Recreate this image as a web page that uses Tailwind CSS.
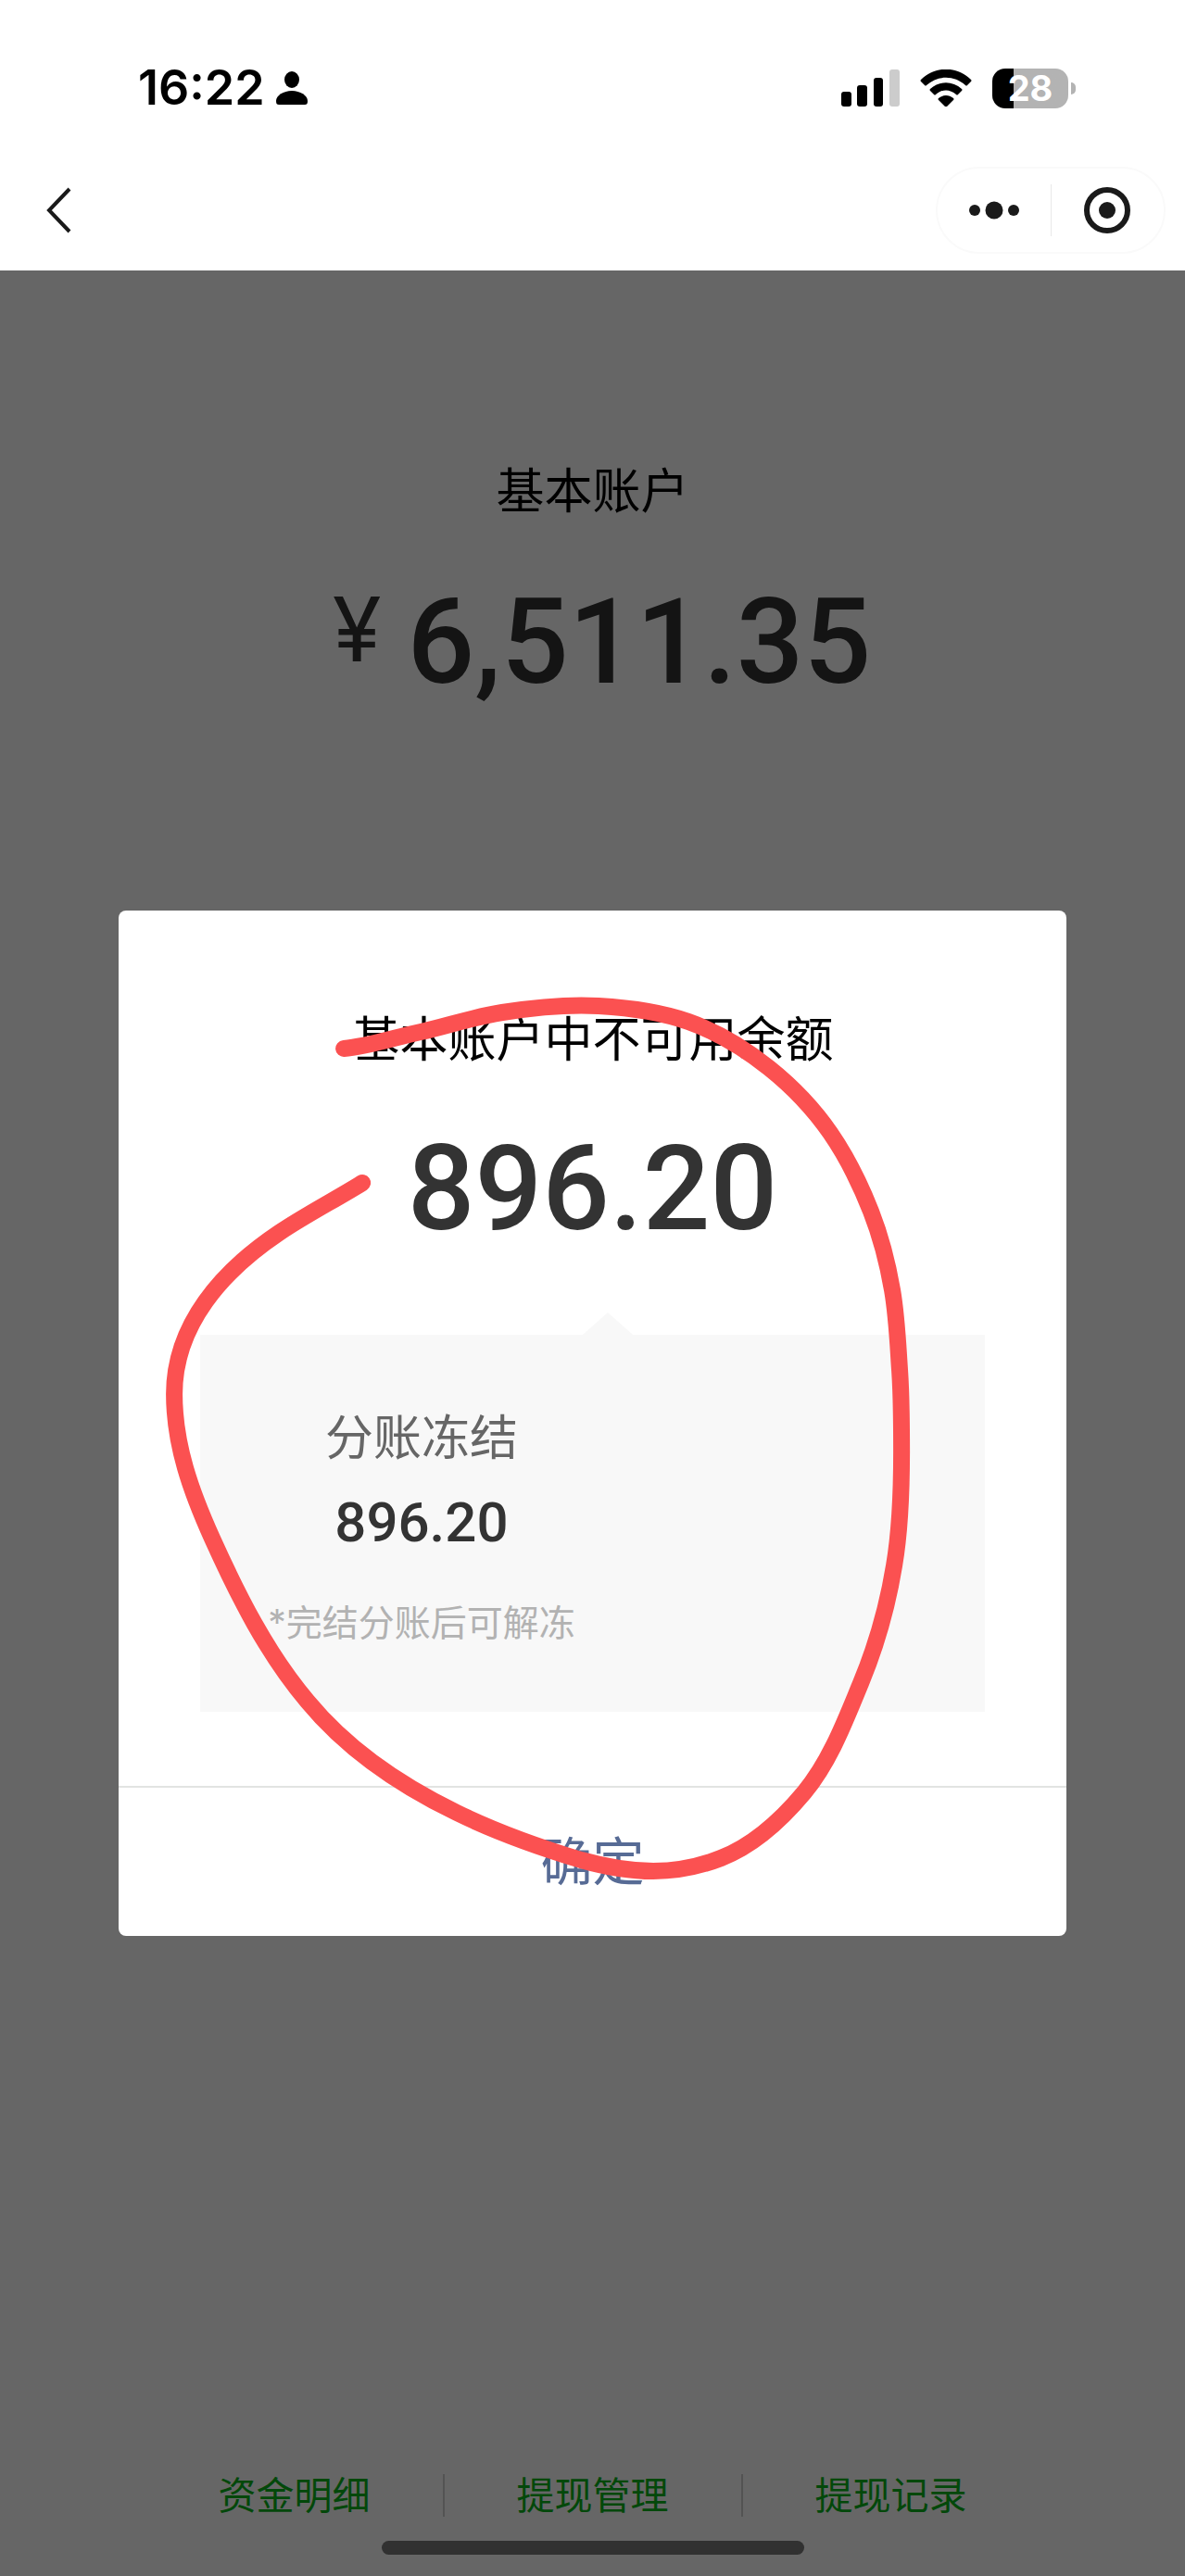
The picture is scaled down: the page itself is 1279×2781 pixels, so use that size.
<!DOCTYPE html>
<html lang="zh-CN">
<head>
    <meta charset="UTF-8">
    <meta name="viewport" content="width=device-width, initial-scale=1.0">
    <title>基本账户</title>
    <script src="https://cdn.jsdelivr.net/npm/@tailwindcss/browser@4"></script>
</head>
<body class="bg-white min-h-screen flex flex-col font-['Inter','Noto_Sans_CJK_SC',sans-serif]">
    <header class="bg-white">
        <!-- Status bar -->
        <div class="flex items-center justify-between pl-[149px] pr-[118px] pt-[66px] h-[124px]">
            <div class="flex items-center gap-3">
                <span class="text-[52px] leading-[60px] font-semibold text-black">16:22</span>
                <svg class="w-[34px] h-9" viewBox="0 0 34 36" fill="#000">
                    <ellipse cx="17" cy="9" rx="8" ry="9"/>
                    <path d="M0 32C0 26 8 21 17 21s17 5 17 11c0 3-1 4-3 4H3c-2 0-3-1-3-4z"/>
                </svg>
            </div>
            <div class="flex items-center gap-[22px]">
                <svg class="w-[63px] h-10" viewBox="0 0 63 40" fill="#000">
                    <rect x="0" y="24" width="11" height="16" rx="3"/>
                    <rect x="17" y="17" width="11" height="23" rx="3"/>
                    <rect x="35" y="9" width="10" height="31" rx="3"/>
                    <rect x="52" y="0" width="11" height="40" rx="3" fill="#ccc"/>
                </svg>
                <svg class="w-14 h-10" viewBox="0 0 56 40" fill="#000">
                    <path d="M1 11C16-4 40-4 55 11q1 1 0 2l-4 4q-1 1-2 0C37 6 19 6 7 17q-1 1-2 0l-4-4q-1-1 0-2z"/>
                    <path d="M11 21c10-9 24-9 34 0q1 1 0 2l-4 4q-1 1-2 0c-7-6-15-6-22 0q-1 1-2 0l-4-4q-1-1 0-2z"/>
                    <path d="M20 31c5-4 11-4 16 0q1 1 0 2l-7 7q-1 1-2 0l-7-7q-1-1 0-2z"/>
                </svg>
                <div class="flex items-center gap-[3px]">
                    <div class="w-[82px] h-[43px] rounded-[14px] bg-linear-to-r from-black from-28% to-[#b3b3b3] to-28% flex items-center justify-center text-white text-[38px] leading-[43px] font-bold">28</div>
                    <div class="w-[5px] h-[13px] rounded-r-full bg-[#b3b3b3]"></div>
                </div>
            </div>
        </div>

        <!-- Nav bar -->
        <div class="flex items-center justify-between pl-12 pr-[21px] pt-[56px] pb-[18px]">
            <button class="cursor-pointer" aria-label="返回">
                <svg class="w-8 h-[50px]" viewBox="0 0 32 50" fill="none" stroke="#1a1a1a" stroke-width="4">
                    <path d="M27 2L5 25l22 23"/>
                </svg>
            </button>
            <div class="flex items-center w-[248px] h-[94px] rounded-full border-2 border-[#fafafa]">
                <button class="flex-1 flex justify-center cursor-pointer" aria-label="更多">
                    <svg class="w-[54px] h-5" viewBox="0 0 54 20" fill="#1a1a1a">
                        <circle cx="6" cy="10" r="6"/>
                        <circle cx="27" cy="10" r="9.5"/>
                        <circle cx="48" cy="10" r="6"/>
                    </svg>
                </button>
                <div class="w-px h-14 bg-[#e8e8e8]"></div>
                <button class="flex-1 flex justify-center cursor-pointer" aria-label="关闭">
                    <svg class="w-[50px] h-[50px]" viewBox="0 0 50 50">
                        <circle cx="25" cy="25" r="22" fill="none" stroke="#1a1a1a" stroke-width="6"/>
                        <circle cx="25" cy="25" r="9" fill="#1a1a1a"/>
                    </svg>
                </button>
            </div>
        </div>
    </header>

    <main class="relative flex-1 flex flex-col items-center bg-white pt-[203px]">
        <h1 class="text-[52px] leading-[72px] text-black">基本账户</h1>
        <p class="flex items-start gap-7 mt-[46px] pl-5 text-[#333]">
            <span class="text-[96px] leading-[132px]">¥</span>
            <span class="text-[128px] leading-[160px] font-medium font-['Roboto',sans-serif]">6,511.35</span>
        </p>

        <nav class="mt-auto flex items-center justify-center gap-[78px] text-[41px] leading-[60px] text-[#08b41a]">
            <a href="#">资金明细</a>
            <span class="w-[2px] h-[46px] bg-[#d0d0d0]"></span>
            <a href="#">提现管理</a>
            <span class="w-[2px] h-[46px] bg-[#d0d0d0]"></span>
            <a href="#">提现记录</a>
        </nav>
        <div class="w-[456px] h-[15px] rounded-full bg-[#7a7a7a] mt-[19px] mb-[23px]"></div>

        <!-- Dialog -->
        <div class="absolute inset-0 bg-black/60 flex items-center justify-center">
            <section class="relative w-4/5 bg-white rounded-lg text-center" role="dialog" aria-labelledby="dialog-title">
                <h2 id="dialog-title" class="pt-[104px] text-[52px] leading-[72px] text-black">基本账户中不可用余额</h2>
                <p class="mt-[44px] text-[128px] leading-[160px] font-medium text-[#333] font-['Roboto',sans-serif]">896.20</p>
                <svg class="w-[54px] h-6 mx-auto mt-[54px] translate-x-4" viewBox="0 0 54 24" fill="#f8f8f8">
                    <path d="M27 0l27 24H0z"/>
                </svg>
                <div class="mx-[88px] bg-[#f8f8f8] pt-[76px] pb-[66px] flex">
                    <div class="w-[478px]">
                        <p class="text-[52px] leading-[72px] text-[#666]">分账冻结</p>
                        <p class="mt-[25px] text-[60px] leading-[60px] font-medium text-[#333] font-['Roboto',sans-serif]">896.20</p>
                        <p class="mt-12 text-[39px] leading-[60px] text-[#b2b2b2]">*完结分账后可解冻</p>
                    </div>
                </div>
                <button class="mt-20 w-full h-[162px] border-t-2 border-[#e2e4e2] text-[56px] text-[#576b95] cursor-pointer">确定</button>

                <!-- Hand-drawn marker -->
                <svg class="absolute inset-0 w-full h-full pointer-events-none" viewBox="128 983 1023 1107" fill="none" stroke="#fb5151" stroke-width="18" stroke-linecap="round" stroke-linejoin="round">
                    <path d="M371 1132C396 1130 426 1120 454 1114S510 1098 542 1093S612 1084 646 1086S712 1092 743 1103S805 1133 830 1153S878 1197 896 1223S929 1280 940 1308S958 1364 963 1393S969 1451 971 1480S973 1538 973 1567C973 1608 972 1649 965 1690C958 1733 946 1776 929 1817C912 1858 896 1901 868 1935C843 1965 814 1992 778 2006C755 2015 730 2020 705 2020C679 2020 652 2015 627 2008C581 1994 536 1978 493 1957C433 1928 375 1889 332 1837C288 1785 257 1723 229 1661C206 1610 188 1560 188 1505C188 1430 240 1372 301 1331C329 1312 362 1295 391 1277"/>
                </svg>
            </section>
        </div>
    </main>
</body>
</html>
